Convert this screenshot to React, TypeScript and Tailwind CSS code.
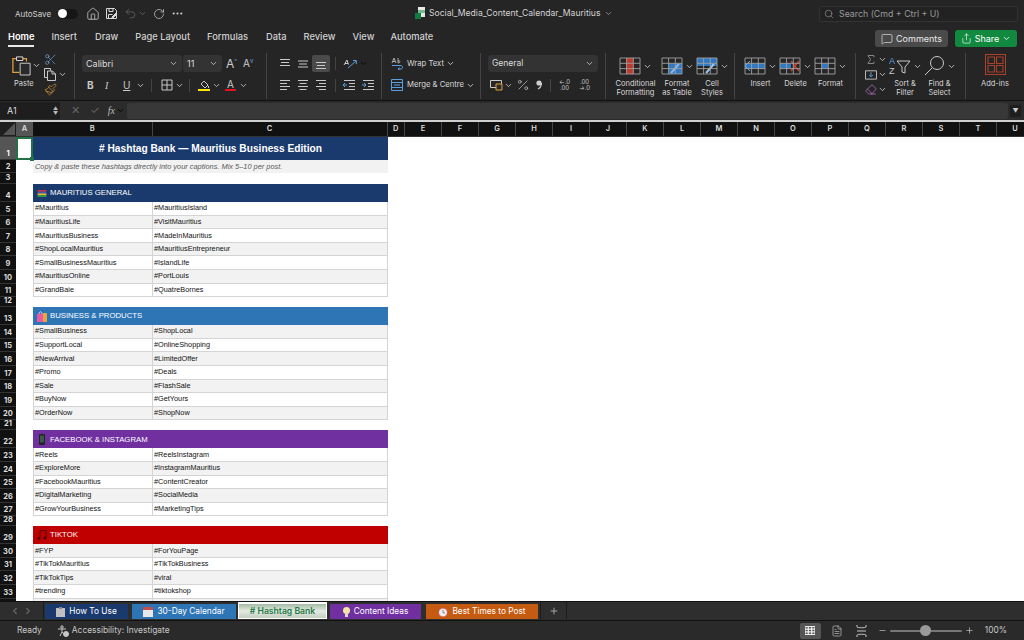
import React from 'react';
import {
  ChevronDown,
  Home,
  MoreHorizontal,
  RotateCw,
  Scissors,
  Search,
  Undo2,
  MessageSquare,
  Share,
  Paintbrush,
  Eraser,
  Sigma,
  Percent,
  Plus,
  Minus,
  ChevronLeft,
  ChevronRight,
  FileText,
} from 'lucide-react';

const Chev = ({ className = 'text-[#d0d0d0]' }: { className?: string }) => (
  <ChevronDown size={9} strokeWidth={2.2} className={`shrink-0 ${className}`} />
);

const Divider = () => <div className="w-px h-[46px] mt-[3px] bg-[#444] shrink-0" />;
const SmallSep = () => <div className="w-px h-[13px] bg-[#444] shrink-0" />;

const Lines = ({ kind }: { kind: 'top' | 'mid' | 'bot' | 'left' | 'center' | 'right' }) => {
  const grey = 'stroke-[#c8c8c8]';
  if (kind === 'top' || kind === 'mid' || kind === 'bot') {
    const y = kind === 'top' ? 1.5 : kind === 'mid' ? 3 : 4.5;
    return (
      <svg width="12" height="12" viewBox="0 0 12 12" fill="none" className={grey}>
        <path d={`M1 ${y}h10M2 ${y + 3}h8M1 ${y + 6}h10`} />
      </svg>
    );
  }
  const d =
    kind === 'left'
      ? 'M1 1.5h10M1 4.5h7M1 7.5h10M1 10.5h7'
      : kind === 'center'
        ? 'M1 1.5h10M2.5 4.5h7M1 7.5h10M2.5 10.5h7'
        : 'M1 1.5h10M4 4.5h7M1 7.5h10M4 10.5h7';
  return (
    <svg width="12" height="12" viewBox="0 0 12 12" fill="none" className={grey}>
      <path d={d} />
    </svg>
  );
};

const PasteIcon = () => (
  <svg width="21" height="23" viewBox="0 0 21 23" fill="none">
    <path d="M5 4H1v15h7" stroke="#e0a040" strokeWidth="1.4" />
    <path d="M12 4h4v3" stroke="#e0a040" strokeWidth="1.4" />
    <path d="M5 2h7v4H5z" stroke="#d8d8d8" strokeWidth="1.1" />
    <path d="M9 9h11v13H9z" fill="#2a2a2a" stroke="#c8c8c8" strokeWidth="1.1" />
  </svg>
);

const GridIcon = ({ children }: { children?: React.ReactNode }) => (
  <svg width="22" height="18" viewBox="0 0 22 18" fill="none">
    {children}
    <path d="M1 1h20v16H1zM1 6.3h20M1 11.6h20M7.6 1v16M14.3 1v16" stroke="#a0a0a0" strokeWidth="0.9" />
  </svg>
);

const BigButton = ({
  icon,
  label,
  className,
}: {
  icon: React.ReactNode;
  label: React.ReactNode;
  className: string;
}) => (
  <div className={`flex flex-col items-center shrink-0 ${className}`}>
    <div className="h-[24px] flex items-center gap-[2px]">
      {icon}
      <Chev />
    </div>
    <div className="mt-[1px] text-[7.5px] leading-[9px] text-center text-[#d8d8d8] whitespace-nowrap">{label}</div>
  </div>
);

const TopBar = () => (
  <div className="h-[27px] flex items-center relative text-[#d0d0d0]">
    <span className="ml-[15px] text-[8px]">AutoSave</span>
    <div className="ml-[7px] w-[20px] h-[10px] rounded-full bg-[#161616] flex items-center">
      <div className="w-[9px] h-[9px] rounded-full bg-white" />
    </div>
    <Home size={14} strokeWidth={1.3} className="ml-[8px]" />
    <svg width="13" height="13" viewBox="0 0 13 13" fill="none" stroke="#d8d8d8" className="ml-[5px]">
      <path d="M1.5 1.5h8l2 2v8h-10zM4 1.5v3h4v-3M3.5 11.5v-4h4" />
      <path d="M7 10l4-4 1 1-4 4H7z" fill="#d8d8d8" />
    </svg>
    <Undo2 size={13} strokeWidth={1.4} className="ml-[6px] text-[#666]" />
    <Chev className="ml-[1px] text-[#666]" />
    <RotateCw size={12} strokeWidth={1.4} className="ml-[6px]" />
    <MoreHorizontal size={13} className="ml-[6px]" />
    <div className="absolute left-[415px] top-[7px] flex items-center gap-[4px]">
      <svg width="10" height="13" viewBox="0 0 10 13">
        <path d="M3 0h7v10H3z" fill="#e8e8e8" />
        <path d="M3 3h7v3H3z" fill="#7ab98a" />
        <path d="M0 6h6v6H0z" fill="#107c41" />
      </svg>
      <span className="text-[8.6px] text-[#d4d4d4] whitespace-nowrap">
        Social_Media_Content_Calendar_Mauritius
      </span>
      <Chev className="text-[#999]" />
    </div>
    <div className="absolute left-[819px] top-[6px] w-[199px] h-[16px] rounded-[3px] border border-[#333] bg-[#222] flex items-center text-[#999]">
      <Search size={10} strokeWidth={1.5} className="ml-[4px]" />
      <span className="ml-[5px] text-[8.8px]">Search (Cmd + Ctrl + U)</span>
    </div>
  </div>
);

const tabs = [
  ['Home', 'ml-[8px]'],
  ['Insert', 'ml-[17px]'],
  ['Draw', 'ml-[18px]'],
  ['Page Layout', 'ml-[17px]'],
  ['Formulas', 'ml-[17px]'],
  ['Data', 'ml-[18px]'],
  ['Review', 'ml-[17px]'],
  ['View', 'ml-[17px]'],
  ['Automate', 'ml-[16px]'],
];

const TabsRow = () => (
  <div className="h-[23px] flex items-start relative">
    {tabs.map(([name, ml], i) => (
      <div
        key={name}
        className={`${ml} h-[20px] flex items-center text-[9.3px] whitespace-nowrap ${
          i === 0 ? 'pt-[2px] font-semibold text-white border-b-2 border-[#e8e8e8]' : 'font-medium text-[#d0d0d0]'
        }`}
      >
        {name}
      </div>
    ))}
    <div className="absolute left-[875px] top-[3px] w-[73px] h-[17px] rounded-[3px] bg-[#4a4a4a] flex items-center justify-center gap-[3px] text-[#e8e8e8]">
      <MessageSquare size={12} strokeWidth={1.3} />
      <span className="text-[9px]">Comments</span>
    </div>
    <div className="absolute left-[955px] top-[3px] w-[62px] h-[17px] rounded-[3px] bg-[#118a3f] flex items-center justify-center gap-[3px] text-white">
      <Share size={11} strokeWidth={1.4} />
      <span className="text-[9px]">Share</span>
      <Chev className="text-white" />
    </div>
  </div>
);

const FontGroup = () => (
  <div className="w-[191px] pl-[7px] shrink-0 flex flex-col">
    <div className="h-[17px] mt-[5px] flex items-center">
      <div className="w-[100px] h-[17px] rounded-[3px] bg-[#333] flex items-center justify-between px-[4px] text-[9px] text-[#ddd]">
        Calibri
        <Chev />
      </div>
      <div className="ml-px w-[39px] h-[17px] rounded-[3px] bg-[#333] flex items-center justify-between px-[4px] text-[9px] text-[#ddd]">
        11
        <Chev />
      </div>
      <span className="ml-[4px] text-[12px] text-[#ccc]">A</span>
      <span className="text-[6px] text-[#6aa7e0] -mt-[7px]">^</span>
      <span className="ml-[6px] text-[10px] text-[#ccc]">A</span>
      <span className="text-[6px] text-[#6aa7e0] -mt-[7px]">v</span>
    </div>
    <div className="h-[18px] mt-[4px] flex items-center text-[#c8c8c8]">
      <span className="ml-[5px] w-[18px] text-[10px] font-bold">B</span>
      <span className="w-[18px] text-[10px] italic font-['Liberation_Serif']">I</span>
      <span className="w-[13px] text-[10px] underline">U</span>
      <Chev />
      <div className="ml-[6px]"><SmallSep /></div>
      <svg width="12" height="12" viewBox="0 0 12 12" fill="none" stroke="#c8c8c8" className="ml-[9px]">
        <path d="M1 1h10v10H1zM6 1v10M1 6h10" />
      </svg>
      <Chev className="ml-[2px] text-[#d0d0d0]" />
      <div className="ml-[5px]"><SmallSep /></div>
      <div className="ml-[8px] w-[12px] flex flex-col items-center">
        <svg width="11" height="9" viewBox="0 0 11 9" fill="none" stroke="#c8c8c8"><path d="M5 1l4 4-3 3-4-4zM9.5 6v2" /></svg>
        <div className="w-[12px] h-[2px] bg-[#ffe600]" />
      </div>
      <Chev className="ml-[2px]" />
      <div className="ml-[4px] w-[11px] flex flex-col items-center">
        <span className="text-[10px] leading-[10px]">A</span>
        <div className="w-[11px] h-[2px] bg-[#e81123]" />
      </div>
      <Chev className="ml-[3px]" />
    </div>
  </div>
);

const Ribbon = () => (
  <div className="h-[51px] flex border-b border-[#111]">
    {/* clipboard */}
    <div className="w-[74px] shrink-0 flex">
      <div className="ml-[12px] mt-[4px] w-[29px] flex flex-col">
        <div className="flex items-center gap-[1px]"><PasteIcon /><Chev /></div>
        <span className="mt-[1px] ml-[2px] text-[7.5px] text-[#d8d8d8]">Paste</span>
      </div>
      <div className="ml-[3px] mt-[3px] flex flex-col gap-[2px] text-[#c8c8c8]">
        <Scissors size={13} strokeWidth={1.2} className="text-[#7aa6d8]" />
        <div className="flex items-center gap-[2px]">
          <svg width="12" height="13" viewBox="0 0 12 13" fill="none" stroke="#c8c8c8">
            <path d="M.5.5h6v2M.5.5v9h3M3.5 3h5l3 3v6.5h-8zM8 3v3h3.5" />
          </svg>
          <Chev />
        </div>
        <Paintbrush size={13} strokeWidth={1.2} className="text-[#e0a040]" />
      </div>
    </div>
    <Divider />
    <FontGroup />
    <Divider />
    {/* alignment */}
    <div className="w-[114px] shrink-0 flex flex-col">
      <div className="h-[17px] mt-[5px] flex items-center">
        <div className="ml-[9px] w-[18px] flex justify-center"><Lines kind="top" /></div>
        <div className="w-[18px] flex justify-center"><Lines kind="mid" /></div>
        <div className="w-[18px] h-[17px] rounded-[2px] bg-[#4a4a4a] flex items-center justify-center"><Lines kind="bot" /></div>
        <div className="ml-[5px]"><SmallSep /></div>
        <svg width="14" height="13" viewBox="0 0 14 13" fill="none" className="ml-[7px]">
          <path d="M1 8l3-5 1.5 4.5M2 6.5h3" stroke="#c8c8c8" />
          <path d="M5 11l8-7M10 3.5h3.3V7" stroke="#5a9fe0" />
        </svg>
        <Chev className="ml-[2px]" />
      </div>
      <div className="h-[18px] mt-[4px] flex items-center">
        <div className="ml-[9px] w-[18px] flex justify-center"><Lines kind="left" /></div>
        <div className="w-[18px] flex justify-center"><Lines kind="center" /></div>
        <div className="w-[18px] flex justify-center"><Lines kind="right" /></div>
        <div className="ml-[5px]"><SmallSep /></div>
        <svg width="13" height="12" viewBox="0 0 13 12" fill="none" className="ml-[7px]">
          <path d="M1 1.5h11M6 4.5h6M6 7.5h6M1 10.5h11" stroke="#c8c8c8" />
          <path d="M4 6H0M2 4L0 6l2 2" stroke="#5a9fe0" />
        </svg>
        <svg width="13" height="12" viewBox="0 0 13 12" fill="none" className="ml-[6px]">
          <path d="M1 1.5h11M6 4.5h6M6 7.5h6M1 10.5h11" stroke="#c8c8c8" />
          <path d="M0 6h4M2 4l2 2-2 2" stroke="#5a9fe0" />
        </svg>
      </div>
    </div>
    <Divider />
    {/* wrap + merge */}
    <div className="w-[98px] shrink-0 flex flex-col pl-[9px] text-[7.7px] text-[#d8d8d8]">
      <div className="h-[17px] mt-[5px] flex items-center whitespace-nowrap">
        <svg width="13" height="13" viewBox="0 0 13 13" fill="none" className="mr-[3px]">
          <path d="M1 6l2-5 2 5M1.8 4.5h2.4M7 1v5M7 4c2-1.5 3 2 0 2" stroke="#c8c8c8" strokeWidth="0.8" />
          <path d="M1 8.5h9c2 0 2 3.5 0 3.5H7M8.5 10.5L7 12l1.5 1" stroke="#5a9fe0" />
        </svg>
        Wrap Text
        <Chev className="ml-[2px]" />
      </div>
      <div className="h-[18px] mt-[4px] flex items-center whitespace-nowrap">
        <svg width="12" height="12" viewBox="0 0 12 12" fill="none" className="mr-[4px]">
          <path d="M.5.5h11v11H.5z" stroke="#5a9fe0" />
          <path d="M.5 3.5h11M.5 8.5h11M3 6h6" stroke="#5a9fe0" />
        </svg>
        Merge &amp; Centre
        <Chev className="ml-[2px]" />
      </div>
    </div>
    <Divider />
    {/* number */}
    <div className="w-[124px] shrink-0 flex flex-col pl-[7px] text-[#c8c8c8]">
      <div className="w-[110px] h-[17px] mt-[5px] rounded-[3px] bg-[#333] flex items-center justify-between px-[4px] text-[8.5px] text-[#ddd]">
        General
        <Chev />
      </div>
      <div className="h-[18px] mt-[4px] flex items-center">
        <svg width="13" height="12" viewBox="0 0 13 12" fill="none" className="ml-[2px]">
          <path d="M.5 1.5h11v7H.5z" stroke="#c8c8c8" />
          <path d="M6 5h6v6H6z" fill="#2a2a2a" stroke="#e0a040" />
        </svg>
        <Chev className="ml-[1px]" />
        <Percent size={14} strokeWidth={1.2} className="ml-[3px]" />
        <svg width="6" height="10" viewBox="0 0 6 10" className="ml-[6px]">
          <circle cx="3" cy="3" r="2.6" fill="#d0d0d0" />
          <path d="M5.5 3c0 3-1.5 5-3.5 6" fill="none" stroke="#d0d0d0" strokeWidth="1.2" />
        </svg>
        <div className="ml-[8px]"><SmallSep /></div>
        <div className="ml-[7px] w-[13px] text-[6px] leading-[6px] text-center">←.0<br />.00</div>
        <div className="ml-[7px] w-[13px] text-[6px] leading-[6px] text-center">.00<br />→.0</div>
      </div>
    </div>
    <Divider />
    {/* styles */}
    <div className="w-[128px] shrink-0 flex pt-[4px]">
      <BigButton
        className="ml-[8px] w-[43px]"
        icon={
          <GridIcon>
            <path d="M7.6 1h6.7v5.3H7.6zM7.6 11.6h6.7V17H7.6z" fill="#c0392b" />
            <path d="M7.6 6.3h6.7v5.3H7.6z" fill="#c0392b" />
          </GridIcon>
        }
        label={<>Conditional<br />Formatting</>}
      />
      <BigButton
        className="ml-[3px] w-[34px]"
        icon={
          <GridIcon>
            <path d="M7.6 6.3H21v10.7H7.6z" fill="#2f78c4" />
            <path d="M10 16l8-9" stroke="#8ab8e8" strokeWidth="2" />
          </GridIcon>
        }
        label={<>Format<br />as Table</>}
      />
      <BigButton
        className="ml-[2px] w-[32px]"
        icon={
          <GridIcon>
            <path d="M1 1h20v8H1z" fill="#2f78c4" />
            <path d="M10 16l8-9" stroke="#9ec6ee" strokeWidth="2" />
          </GridIcon>
        }
        label={<>Cell<br />Styles</>}
      />
    </div>
    <Divider />
    {/* cells */}
    <div className="w-[120px] shrink-0 flex pt-[4px]">
      <BigButton
        className="ml-[9px] w-[33px]"
        icon={<GridIcon><path d="M1 6.3h20v5.3H1z" fill="#2f78c4" /><path d="M6 4L1 9l5 5" stroke="#6fb1ee" /></GridIcon>}
        label="Insert"
      />
      <BigButton
        className="ml-[2px] w-[33px]"
        icon={<GridIcon><path d="M1 6.3h11v5.3H1z" fill="#2f78c4" /><path d="M12 4l8 10M20 4l-8 10" stroke="#d04030" strokeWidth="1.3" /></GridIcon>}
        label="Delete"
      />
      <BigButton
        className="ml-[2px] w-[33px]"
        icon={<GridIcon><path d="M7.6 6.3h6.7v5.3H7.6z" fill="#2f78c4" /></GridIcon>}
        label="Format"
      />
    </div>
    <Divider />
    {/* editing */}
    <div className="w-[109px] shrink-0 flex">
      <div className="ml-[9px] mt-[3px] flex flex-col gap-[2px] w-[22px] text-[#c8c8c8]">
        <div className="flex items-center gap-[1px]"><Sigma size={13} strokeWidth={1.2} /><Chev /></div>
        <div className="flex items-center gap-[1px]">
          <svg width="13" height="13" viewBox="0 0 13 13" fill="none">
            <path d="M.5 2.5h12v9H.5z" stroke="#c8c8c8" />
            <path d="M6.5 4v5M4.5 7l2 2 2-2" stroke="#5a9fe0" />
          </svg>
          <Chev />
        </div>
        <div className="flex items-center gap-[1px]"><Eraser size={13} strokeWidth={1.3} className="text-[#c77bd8]" /><Chev /></div>
      </div>
      <div className="pt-[4px] flex">
        <BigButton
          className="w-[36px]"
          icon={
            <svg width="22" height="20" viewBox="0 0 22 20" fill="none" stroke="#c8c8c8">
              <text x="0" y="8" fontSize="9" fill="#5a9fe0" stroke="none" fontFamily="Liberation Sans">A</text>
              <text x="0" y="18" fontSize="9" fill="#c8c8c8" stroke="none" fontFamily="Liberation Sans">Z</text>
              <path d="M8 5h13l-5 6v6l-3-1v-5z" />
            </svg>
          }
          label={<>Sort &amp;<br />Filter</>}
        />
        <BigButton
          className="w-[33px]"
          icon={
            <svg width="21" height="22" viewBox="0 0 21 22" fill="none" stroke="#c8c8c8">
              <circle cx="13" cy="8" r="6.5" />
              <path d="M8 13l-7 7" />
            </svg>
          }
          label={<>Find &amp;<br />Select</>}
        />
      </div>
    </div>
    <Divider />
    <div className="flex-1 flex flex-col items-center pt-[4px]">
      <svg width="21" height="21" viewBox="0 0 21 21" fill="none" stroke="#a8402a" strokeWidth="1.1">
        <path d="M.5.5h20v20H.5zM3 3h6.5v6.5H3zM11.5 3H18v6.5h-6.5zM3 11.5h6.5V18H3zM11.5 11.5H18V18h-6.5z" />
      </svg>
      <span className="mt-[3px] text-[7.5px] text-[#d8d8d8]">Add-ins</span>
    </div>
  </div>
);

const FormulaBar = () => (
  <div className="h-[21px] flex items-center bg-[#2b2b2b] border-b-2 border-[#cfcfcf]">
    <div className="w-[60px] h-[17px] bg-[#1e1e1e] flex items-center justify-between pl-[7px] pr-[2px] text-[9px] text-[#ddd]">
      A1
      <div className="flex flex-col leading-[5px] text-[5px] text-[#bbb]"><span>▲</span><span>▼</span></div>
    </div>
    <span className="ml-[11px] text-[11px] text-[#666]">✕</span>
    <span className="ml-[10px] text-[11px] text-[#666]">✓</span>
    <span className="ml-[8px] text-[10px] italic text-[#bbb] font-['Liberation_Serif']">fx</span>
    <Chev className="ml-[1px]" />
    <div className="ml-[2px] flex-1 h-[16px] rounded-[2px] bg-[#383838]" />
    <div className="ml-[2px] mr-[3px] w-[11px] h-[12px] bg-[#1e1e1e] flex items-center justify-center text-[6px] text-[#ccc]">▼</div>
  </div>
);

const letters = 'EFGHIJKLMNOPQRSTU'.split('');

const ColumnHeaders = () => (
  <div className="h-[15px] flex bg-[#111] text-[7.5px] font-semibold text-[#ddd] border-b border-[#333]">
    <div className="w-[16px] shrink-0 flex items-end justify-end p-px bg-[#1e1e1e]">
      <div className="w-0 h-0 border-l-[12px] border-l-transparent border-b-[12px] border-b-[#555]" />
    </div>
    <div className="w-[17px] shrink-0 bg-[#555] flex items-center justify-center">A</div>
    <div className="w-[119.5px] shrink-0 flex items-center justify-center border-r border-[#444]">B</div>
    <div className="w-[235px] shrink-0 flex items-center justify-center border-r border-[#444]">C</div>
    <div className="w-[17.5px] shrink-0 flex items-center justify-center border-r border-[#444]">D</div>
    {letters.map((l) => (
      <div key={l} className="w-[37px] shrink-0 flex items-center justify-center border-r border-[#444]">
        {l}
      </div>
    ))}
  </div>
);

const RowNum = ({ n, selected }: { n?: number; selected?: boolean }) => (
  <div
    className={`w-[16px] shrink-0 h-full flex items-end justify-center text-[7.5px] leading-[11px] font-bold border-b border-[#333] ${
      selected ? 'bg-[#555] text-white' : 'bg-[#111] text-[#ddd]'
    }`}
  >
    {n}
  </div>
);

const Blank = ({ n, h }: { n: number; h: string }) => (
  <div className={`flex ${h}`}>
    <RowNum n={n} />
  </div>
);

const Flag = () => (
  <svg width="10" height="7" viewBox="0 0 10 8">
    <path d="M0 0h10v2H0z" fill="#c8324a" />
    <path d="M0 2h10v2H0z" fill="#4a5aa8" />
    <path d="M0 4h10v2H0z" fill="#e8c030" />
    <path d="M0 6h10v2H0z" fill="#2c9a4a" />
  </svg>
);
const Bag = () => (
  <svg width="10" height="11" viewBox="0 0 10 11">
    <path d="M0 3h7v8H0z" fill="#e85aa8" />
    <path d="M6 2h4v9H6z" fill="#e8a838" />
    <path d="M2 3c0-3 3-3 3 0" fill="none" stroke="#f0c0e0" />
  </svg>
);
const Phone = () => (
  <svg width="6" height="11" viewBox="0 0 6 11">
    <rect width="6" height="11" rx="1" fill="#222" />
    <path d="M1 1.5h4v7H1z" fill="#3a5a48" />
  </svg>
);
const Note = () => (
  <svg width="10" height="10" viewBox="0 0 10 10">
    <path d="M3 1l6-1v7.5M3 1v7" fill="none" stroke="#4a0808" strokeWidth="1" />
    <circle cx="2" cy="8.5" r="1.5" fill="#4a0808" />
    <circle cx="8" cy="8" r="1.5" fill="#4a0808" />
  </svg>
);

const SectionHead = ({
  n,
  bg,
  icon,
  title,
}: {
  n: number;
  bg: string;
  icon: React.ReactNode;
  title: string;
}) => (
  <div className="flex h-[18px]">
    <RowNum n={n} />
    <div className="w-[17px] shrink-0" />
    <div className={`w-[355px] shrink-0 flex items-center ${bg}`}>
      <div className="w-[17px] flex justify-center">{icon}</div>
      <span className="text-[7.75px] text-white font-['Liberation_Sans']">{title}</span>
    </div>
  </div>
);

const DataRow = ({ n, b, c, alt }: { n?: number; b: string; c: string; alt: boolean }) => (
  <div className="flex h-[13.6px]">
    <RowNum n={n} />
    <div className="w-[17px] shrink-0" />
    <div
      className={`w-[355px] shrink-0 flex border-b border-[#d4d4d4] border-x text-[7.3px] text-[#111] font-['Liberation_Sans'] ${
        alt ? 'bg-[#f2f2f2]' : 'bg-white'
      }`}
    >
      <div className="w-[119px] shrink-0 flex items-center pl-px pt-px border-r border-[#d4d4d4]">{b}</div>
      <div className="flex-1 flex items-center pl-px pt-px">{c}</div>
    </div>
  </div>
);

type Section = {
  start: number;
  bg: string;
  icon: React.ReactNode;
  title: string;
  altFirst: boolean;
  rows: [string, string][];
};

const sections: Section[] = [
  {
    start: 4,
    bg: 'bg-[#1a3a6e]',
    icon: <Flag />,
    title: 'MAURITIUS GENERAL',
    altFirst: false,
    rows: [
      ['#Mauritius', '#MauritiusIsland'],
      ['#MauritiusLife', '#VisitMauritius'],
      ['#MauritiusBusiness', '#MadeInMauritius'],
      ['#ShopLocalMauritius', '#MauritiusEntrepreneur'],
      ['#SmallBusinessMauritius', '#IslandLife'],
      ['#MauritiusOnline', '#PortLouis'],
      ['#GrandBaie', '#QuatreBornes'],
    ],
  },
  {
    start: 13,
    bg: 'bg-[#2e75b6]',
    icon: <Bag />,
    title: 'BUSINESS & PRODUCTS',
    altFirst: true,
    rows: [
      ['#SmallBusiness', '#ShopLocal'],
      ['#SupportLocal', '#OnlineShopping'],
      ['#NewArrival', '#LimitedOffer'],
      ['#Promo', '#Deals'],
      ['#Sale', '#FlashSale'],
      ['#BuyNow', '#GetYours'],
      ['#OrderNow', '#ShopNow'],
    ],
  },
  {
    start: 22,
    bg: 'bg-[#7030a0]',
    icon: <Phone />,
    title: 'FACEBOOK & INSTAGRAM',
    altFirst: false,
    rows: [
      ['#Reels', '#ReelsInstagram'],
      ['#ExploreMore', '#InstagramMauritius'],
      ['#FacebookMauritius', '#ContentCreator'],
      ['#DigitalMarketing', '#SocialMedia'],
      ['#GrowYourBusiness', '#MarketingTips'],
    ],
  },
  {
    start: 29,
    bg: 'bg-[#c00000]',
    icon: <Note />,
    title: 'TIKTOK',
    altFirst: true,
    rows: [
      ['#FYP', '#ForYouPage'],
      ['#TikTokMauritius', '#TikTokBusiness'],
      ['#TikTokTips', '#viral'],
      ['#trending', '#tiktokshop'],
      ['', ''],
    ],
  },
];

const Sheet = () => (
  <div className="h-[464px] overflow-hidden bg-white relative">
    <div className="flex h-[23px]">
      <RowNum n={1} selected />
      <div className="w-[17px] shrink-0 relative z-10 border-2 border-[#217346]">
        <div className="absolute -right-[3px] -bottom-[3px] w-[4px] h-[4px] bg-[#217346]" />
      </div>
      <div className="w-[355px] shrink-0 bg-[#1a3a6e] flex items-center justify-center text-[10.2px] font-bold text-white font-['Liberation_Sans']">
        # Hashtag Bank — Mauritius Business Edition
      </div>
    </div>
    <div className="flex h-[13px]">
      <RowNum n={2} />
      <div className="w-[17px] shrink-0" />
      <div className="w-[355px] shrink-0 bg-[#f2f2f2] flex items-center pl-[2px] text-[7.42px] italic text-[#595959] font-['Liberation_Sans']">
        Copy &amp; paste these hashtags directly into your captions. Mix 5–10 per post.
      </div>
    </div>
    <Blank n={3} h="h-[11px]" />
    {sections.map((s, si) => (
      <React.Fragment key={s.title}>
        <SectionHead n={s.start} bg={s.bg} icon={s.icon} title={s.title} />
        {s.rows.map(([b, c], i) => (
          <DataRow
            key={b + i}
            n={b ? s.start + 1 + i : undefined}
            b={b}
            c={c}
            alt={i % 2 === 0 ? s.altFirst : !s.altFirst}
          />
        ))}
        {si < sections.length - 1 && <Blank n={s.start + s.rows.length + 1} h="h-[10px]" />}
      </React.Fragment>
    ))}
  </div>
);

const SheetTab = ({
  icon,
  label,
  className,
}: {
  icon: React.ReactNode;
  label: string;
  className: string;
}) => (
  <div className={`h-[15px] mt-[2px] flex items-center justify-center gap-[4px] shrink-0 text-[8.3px] text-white whitespace-nowrap ${className}`}>
    {icon}
    {label}
  </div>
);

const SheetTabs = () => (
  <div className="h-[19px] flex bg-[#2e2e2e] border-t border-[#111]">
    <div className="w-[44px] shrink-0 flex items-center justify-center gap-[3px] text-[#666] border-r border-[#1c1c1c]">
      <ChevronLeft size={10} strokeWidth={3} />
      <ChevronRight size={10} strokeWidth={3} />
    </div>
    <SheetTab
      className="ml-px w-[83px] bg-[#1a3a6e]"
      label="How To Use"
      icon={
        <svg width="9" height="10" viewBox="0 0 9 10"><path d="M0 1h9v9H0z" fill="#c0c0c0" /><path d="M3 0h3v2H3z" fill="#888" /></svg>
      }
    />
    <SheetTab
      className="ml-[4px] w-[104px] bg-[#2e75b6]"
      label="30-Day Calendar"
      icon={
        <svg width="10" height="10" viewBox="0 0 10 10"><path d="M0 0h10v10H0z" fill="#e8e8e8" /><path d="M0 0h10v3H0z" fill="#c0504d" /></svg>
      }
    />
    <div className="ml-[2px] w-[89px] h-[17px] shrink-0 bg-white px-[1px] pt-[2px] pb-[1px]">
      <div className="h-full bg-gradient-to-b from-[#a5bba5] via-[#e4ebe2] to-[#c4cdc0] flex items-center justify-center text-[8.6px] text-[#1e7a46] font-semibold whitespace-nowrap">
        # Hashtag Bank
      </div>
    </div>
    <SheetTab
      className="ml-[3px] w-[91px] bg-[#7030a0]"
      label="Content Ideas"
      icon={
        <svg width="7" height="10" viewBox="0 0 7 10"><circle cx="3.5" cy="3.5" r="3.5" fill="#f5e6a8" /><path d="M2 7h3v3H2z" fill="#d8d8d8" /></svg>
      }
    />
    <SheetTab
      className="ml-[5px] w-[112px] bg-[#c55a11]"
      label="Best Times to Post"
      icon={
        <svg width="10" height="10" viewBox="0 0 10 10"><circle cx="5" cy="5.5" r="4.5" fill="#eee" stroke="#d04a3a" /><path d="M5 3v3h2" stroke="#888" fill="none" /></svg>
      }
    />
    <div className="ml-[2px] w-[27px] h-[17px] shrink-0 flex items-center justify-center text-[#bbb] border-x border-[#1c1c1c]">
      <Plus size={10} strokeWidth={2} />
    </div>
  </div>
);

const StatusBar = () => (
  <div className="flex-1 flex items-center bg-[#2a2a2a] border-t border-[#111] text-[8.4px] text-[#c8c8c8]">
    <span className="ml-[17px]">Ready</span>
    <svg width="11" height="12" viewBox="0 0 11 12" fill="none" stroke="#c8c8c8" className="ml-[16px]">
      <circle cx="4" cy="2" r="1.2" />
      <path d="M0 4h8M4 4v3M4 7l-2 4M4 7l2 2" />
      <circle cx="8" cy="9" r="2.5" fill="#c8c8c8" />
    </svg>
    <span className="ml-[3px]">Accessibility: Investigate</span>
    <div className="ml-auto flex items-center">
      <div className="w-[21px] h-[16px] rounded-[2px] bg-[#555] flex items-center justify-center">
        <svg width="10" height="9" viewBox="0 0 10 9" fill="none" stroke="#eee" strokeWidth="1.2">
          <path d="M0 .5h10v8H0zM0 3.2h10M0 5.8h10M3.3 0v9M6.7 0v9" />
        </svg>
      </div>
      <FileText size={12} strokeWidth={1.3} className="ml-[10px]" />
      <svg width="11" height="12" viewBox="0 0 11 12" fill="none" stroke="#c8c8c8" className="ml-[13px]">
        <path d="M1 0v2c0 1 9 1 9 0V0M1 12v-2c0-1 9-1 9 0v2M1 6h9" />
      </svg>
      <Minus size={9} strokeWidth={1.8} className="ml-[11px]" />
      <div className="ml-[3px] w-[72px] h-[2px] bg-[#777] rounded-full flex items-center justify-center">
        <div className="w-[11px] h-[11px] rounded-full bg-[#9a9a9a]" />
      </div>
      <Plus size={9} strokeWidth={1.8} className="ml-[3px]" />
      <span className="ml-[11px] mr-[17px]">100%</span>
    </div>
  </div>
);

export default function App() {
  return (
    <div className="w-[1024px] h-[640px] overflow-hidden flex flex-col bg-[#252525] font-['Inter',sans-serif]">
      <TopBar />
      <TabsRow />
      <Ribbon />
      <FormulaBar />
      <ColumnHeaders />
      <Sheet />
      <SheetTabs />
      <StatusBar />
    </div>
  );
}
